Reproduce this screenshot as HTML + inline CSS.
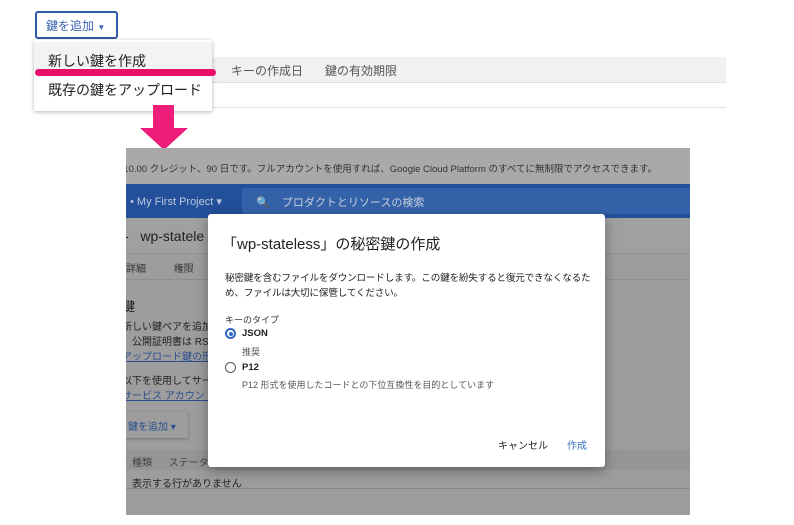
<!DOCTYPE html>
<html><head><meta charset="utf-8"><style>
*{margin:0;padding:0;box-sizing:border-box}
body{width:794px;height:525px;background:#fff;position:relative;overflow:hidden;font-family:"Liberation Sans","Noto Sans CJK JP",sans-serif;color:#222}
.a{position:absolute}
</style></head><body>
<div class="a" style="left:210px;top:57px;width:516px;height:26px;background:#f1f1f1;border-bottom:1px solid #e0e0e0"></div>
<div class="a" style="left:231px;top:62px;font-size:12px;color:#555">キーの作成日</div>
<div class="a" style="left:325px;top:62px;font-size:12px;color:#555">鍵の有効期限</div>
<div class="a" style="left:210px;top:107px;width:516px;height:1px;background:#e3e3e3"></div>
<div class="a" style="left:35px;top:11px;width:83px;height:28px;border:2px solid #2f5aa8;border-radius:3px;font-size:12px;color:#3a63b0;padding:4px 0 0 9px">鍵を追加 <span style="font-size:8px">▼</span></div>
<div class="a" style="left:34px;top:40px;width:178px;height:71px;background:#fff;box-shadow:0 1px 4px rgba(0,0,0,.3);border-radius:2px"></div>
<div class="a" style="left:34px;top:42px;width:178px;height:28px;background:#f3f3f3"></div>
<div class="a" style="left:48px;top:51px;font-size:14px;color:#222">新しい鍵を作成</div>
<div class="a" style="left:48px;top:80px;font-size:14px;color:#222">既存の鍵をアップロード</div>
<div class="a" style="left:35px;top:69px;width:181px;height:7px;background:#e8106a;border-radius:4px"></div>
<div class="a" style="left:153px;top:105px;width:21px;height:24px;background:#ee1d7a"></div>
<div class="a" style="left:140px;top:128px;width:0;height:0;border-left:24px solid transparent;border-right:24px solid transparent;border-top:22px solid #ee1d7a"></div>
<div class="a" style="left:126px;top:148px;width:564px;height:367px;background:#9d9d9d;overflow:hidden">
 <div class="a" style="left:0;top:0;width:564px;height:36px;background:#a9a9a9"></div>
 <div class="a" style="left:-8px;top:13px;font-size:9.5px;color:#333;white-space:nowrap">$10.00 クレジット、90 日です。フルアカウントを使用すれば、Google Cloud Platform のすべてに無制限でアクセスできます。</div>
 <div class="a" style="left:0;top:36px;width:564px;height:34px;background:#23509a"></div>
 <div class="a" style="left:4px;top:47px;font-size:11px;color:#bcc8dc">• My First Project ▾</div>
 <div class="a" style="left:116px;top:40px;width:450px;height:26px;background:#3462a8;border-radius:3px"></div>
 <div class="a" style="left:130px;top:46px;font-size:11px;color:#c8d0e0">🔍&nbsp;&nbsp;&nbsp;&nbsp;プロダクトとリソースの検索</div>
 <div class="a" style="left:0;top:70px;width:564px;height:36px;background:#a0a0a0;border-bottom:1px solid #8e8e8e"></div>
 <div class="a" style="left:-2px;top:80px;font-size:14px;color:#222">-&nbsp;&nbsp;&nbsp;wp-statele</div>
 <div class="a" style="left:0;top:112px;font-size:10px;color:#333">詳細&nbsp;&nbsp;&nbsp;&nbsp;&nbsp;&nbsp;&nbsp;&nbsp;&nbsp;&nbsp;権限</div>
 <div class="a" style="left:0;top:131px;width:564px;height:1px;background:#8e8e8e"></div>
 <div class="a" style="left:-4px;top:148px;font-size:13px;color:#222">鍵</div>
 <div class="a" style="left:-4px;top:172px;font-size:10px;color:#222;line-height:15px">新しい鍵ペアを追加す<br>。公開証明書は RS<br><span style="color:#2a4f8e;text-decoration:underline">アップロード鍵の形式</span></div>
 <div class="a" style="left:-4px;top:226px;font-size:10px;color:#222;line-height:15px">以下を使用してサービ<br><span style="color:#2a4f8e;text-decoration:underline">サービス アカウント</span></div>
 <div class="a" style="left:-4px;top:264px;width:66px;height:26px;background:#9d9d9d;box-shadow:0 1px 3px rgba(0,0,0,.3);font-size:10px;color:#2a4f8e;padding:6px 0 0 6px">鍵を追加 ▾</div>
 <div class="a" style="left:0;top:302px;width:564px;height:20px;background:#959595"></div>
 <div class="a" style="left:6px;top:306px;font-size:10px;color:#444">種類&nbsp;&nbsp;&nbsp;&nbsp;&nbsp;&nbsp;ステータス</div>
 <div class="a" style="left:6px;top:327px;font-size:10px;color:#222">表示する行がありません</div>
 <div class="a" style="left:0;top:340px;width:564px;height:1px;background:#888"></div>
</div>
<div class="a" style="left:208px;top:214px;width:397px;height:253px;background:#fff;border-radius:3px;box-shadow:0 4px 12px rgba(0,0,0,.35)"></div>
<div class="a" style="left:222px;top:233px;font-size:15px;color:#222">「wp-stateless」の秘密鍵の作成</div>
<div class="a" style="left:225px;top:271px;font-size:9.6px;letter-spacing:-0.2px;color:#222;line-height:15px;white-space:nowrap">秘密鍵を含むファイルをダウンロードします。この鍵を紛失すると復元できなくなるた<br>め、ファイルは大切に保管してください。</div>
<div class="a" style="left:225px;top:313px;font-size:9px;color:#333">キーのタイプ</div>
<div class="a" style="left:225px;top:328px;width:11px;height:11px;border:2px solid #3467c4;border-radius:50%"></div>
<div class="a" style="left:228.5px;top:331.5px;width:4px;height:4px;background:#3467c4;border-radius:50%"></div>
<div class="a" style="left:242px;top:328px;font-size:9.5px;font-weight:bold;color:#222">JSON</div>
<div class="a" style="left:242px;top:345px;font-size:9px;color:#555">推奨</div>
<div class="a" style="left:225px;top:362px;width:11px;height:11px;border:1.5px solid #555;border-radius:50%"></div>
<div class="a" style="left:242px;top:362px;font-size:9.5px;font-weight:bold;color:#222">P12</div>
<div class="a" style="left:242px;top:378px;font-size:9px;color:#555">P12 形式を使用したコードとの下位互換性を目的としています</div>
<div class="a" style="left:498px;top:437px;font-size:10px;color:#222">キャンセル</div>
<div class="a" style="left:567px;top:437px;font-size:10px;color:#3a6fc4">作成</div>
</body></html>
